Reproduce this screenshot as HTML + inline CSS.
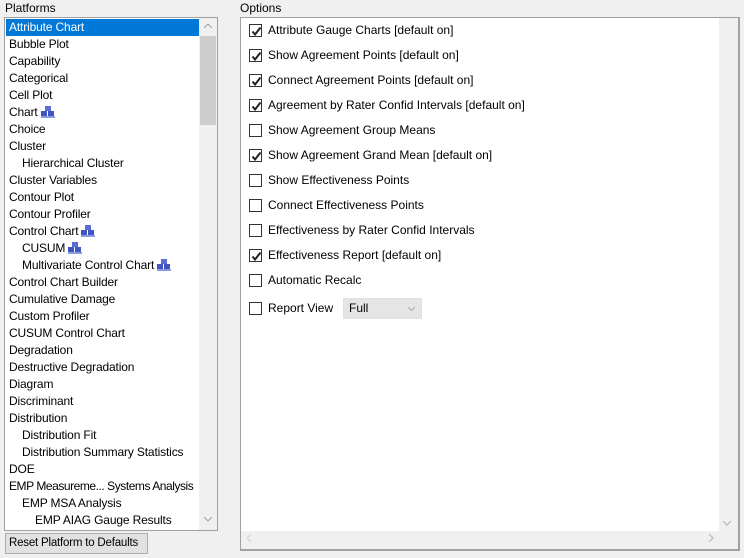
<!DOCTYPE html>
<html><head><style>
*{margin:0;padding:0;box-sizing:border-box}
body{width:744px;height:558px;background:#f0f0f0;font-family:"Liberation Sans",sans-serif;font-size:12px;color:#000;position:relative;overflow:hidden}
.lbl{position:absolute;top:1px;font-size:12px}
#list{position:absolute;left:4px;top:17px;width:214px;height:514px;border:1px solid #a0a0a0;background:#fff;overflow:hidden}
.it{position:absolute;left:1px;height:17px;line-height:17px;white-space:nowrap;padding-left:3px;letter-spacing:-0.15px}
.sel{background:#0078d7;color:#fff;width:194px}
#vs{position:absolute;left:194px;top:0;width:18px;height:512px;background:#f0f0f0}
#thumb{position:absolute;left:1px;top:18px;width:16px;height:89px;background:#cdcdcd}
#opt{position:absolute;left:240px;top:17px;width:500px;height:534px;border:1px solid #a0a0a0;border-right:2px solid #a0a0a0;border-bottom:2px solid #a0a0a0;background:#f0f0f0}
#optin{position:absolute;left:0;top:0;width:478px;height:513px;background:#fff}
.row{position:absolute;left:9px;height:14px;white-space:nowrap}
.cb{position:absolute;left:0;top:0;width:13px;height:13px;border:1px solid #333;background:#fff}
.cb svg{position:absolute;left:1px;top:1px}
.row span{position:absolute;left:19px;top:-1px}
#btn{position:absolute;left:5px;top:533px;width:143px;height:21px;border:1px solid #adadad;background:#e1e1e1;line-height:19px;padding-left:3px;white-space:nowrap;font-size:11.5px;letter-spacing:-0.2px;overflow:hidden}
#dd{position:absolute;left:343px;top:298px;width:79px;height:21px;background:#e5e5e5;border:1px solid #e0e0e0;padding-left:5px;line-height:19px}
.ic{display:inline-block;vertical-align:-2px;margin-left:3px}
</style></head><body>
<div class="lbl" style="left:5px">Platforms</div>
<div class="lbl" style="left:240px">Options</div>
<div id="list">
<div class="it sel" style="top:1px">Attribute Chart</div>
<div class="it" style="top:18px">Bubble Plot</div>
<div class="it" style="top:35px">Capability</div>
<div class="it" style="top:52px">Categorical</div>
<div class="it" style="top:69px">Cell Plot</div>
<div class="it" style="top:86px">Chart<svg class="ic" width="14" height="12"><rect x="4" y="0" width="6" height="5" fill="#5a6fd0"/><rect x="0" y="5" width="6" height="6" fill="#3f55c0"/><rect x="7" y="5" width="6" height="6" fill="#3f55c0"/><rect x="0" y="10" width="14" height="2" fill="#8c9be0"/></svg></div>
<div class="it" style="top:103px">Choice</div>
<div class="it" style="top:120px">Cluster</div>
<div class="it" style="top:137px;padding-left:16px">Hierarchical Cluster</div>
<div class="it" style="top:154px">Cluster Variables</div>
<div class="it" style="top:171px">Contour Plot</div>
<div class="it" style="top:188px">Contour Profiler</div>
<div class="it" style="top:205px">Control Chart<svg class="ic" width="14" height="12"><rect x="4" y="0" width="6" height="5" fill="#5a6fd0"/><rect x="0" y="5" width="6" height="6" fill="#3f55c0"/><rect x="7" y="5" width="6" height="6" fill="#3f55c0"/><rect x="0" y="10" width="14" height="2" fill="#8c9be0"/></svg></div>
<div class="it" style="top:222px;padding-left:16px">CUSUM<svg class="ic" width="14" height="12"><rect x="4" y="0" width="6" height="5" fill="#5a6fd0"/><rect x="0" y="5" width="6" height="6" fill="#3f55c0"/><rect x="7" y="5" width="6" height="6" fill="#3f55c0"/><rect x="0" y="10" width="14" height="2" fill="#8c9be0"/></svg></div>
<div class="it" style="top:239px;padding-left:16px">Multivariate Control Chart<svg class="ic" width="14" height="12"><rect x="4" y="0" width="6" height="5" fill="#5a6fd0"/><rect x="0" y="5" width="6" height="6" fill="#3f55c0"/><rect x="7" y="5" width="6" height="6" fill="#3f55c0"/><rect x="0" y="10" width="14" height="2" fill="#8c9be0"/></svg></div>
<div class="it" style="top:256px">Control Chart Builder</div>
<div class="it" style="top:273px">Cumulative Damage</div>
<div class="it" style="top:290px">Custom Profiler</div>
<div class="it" style="top:307px">CUSUM Control Chart</div>
<div class="it" style="top:324px">Degradation</div>
<div class="it" style="top:341px">Destructive Degradation</div>
<div class="it" style="top:358px">Diagram</div>
<div class="it" style="top:375px">Discriminant</div>
<div class="it" style="top:392px">Distribution</div>
<div class="it" style="top:409px;padding-left:16px">Distribution Fit</div>
<div class="it" style="top:426px;padding-left:16px">Distribution Summary Statistics</div>
<div class="it" style="top:443px">DOE</div>
<div class="it" style="top:460px;letter-spacing:-0.45px">EMP Measureme... Systems Analysis</div>
<div class="it" style="top:477px;padding-left:16px">EMP MSA Analysis</div>
<div class="it" style="top:494px;padding-left:29px">EMP AIAG Gauge Results</div>
<div id="vs"><div id="thumb"></div>
<svg style="position:absolute;left:5px;top:6px" width="8" height="5"><path d="M0 4L4 0L8 4" stroke="#a0a0a0" fill="none"/></svg>
<svg style="position:absolute;left:5px;top:499px" width="8" height="5"><path d="M0 0L4 4L8 0" stroke="#a0a0a0" fill="none"/></svg>
</div>
</div>
<div id="opt"><div id="optin"></div>
<svg style="position:absolute;left:482px;top:503px" width="8" height="5"><path d="M0 0L4 4L8 0" stroke="#b0b0b0" fill="none"/></svg>
<svg style="position:absolute;left:468px;top:516px" width="5" height="8"><path d="M0 0L4 4L0 8" stroke="#b0b0b0" fill="none"/></svg>
<svg style="position:absolute;left:6px;top:516px" width="5" height="8"><path d="M4 0L0 4L4 8" stroke="#d0d0d0" fill="none"/></svg>
</div>
<div class="row" style="left:249px;top:24px"><div class="cb"><svg width="11" height="11"><path d="M1.5 5.5L4 8.5L9.5 1.5" stroke="#222" stroke-width="2" fill="none"/></svg></div><span>Attribute Gauge Charts [default on]</span></div>
<div class="row" style="left:249px;top:49px"><div class="cb"><svg width="11" height="11"><path d="M1.5 5.5L4 8.5L9.5 1.5" stroke="#222" stroke-width="2" fill="none"/></svg></div><span>Show Agreement Points [default on]</span></div>
<div class="row" style="left:249px;top:74px"><div class="cb"><svg width="11" height="11"><path d="M1.5 5.5L4 8.5L9.5 1.5" stroke="#222" stroke-width="2" fill="none"/></svg></div><span>Connect Agreement Points [default on]</span></div>
<div class="row" style="left:249px;top:99px"><div class="cb"><svg width="11" height="11"><path d="M1.5 5.5L4 8.5L9.5 1.5" stroke="#222" stroke-width="2" fill="none"/></svg></div><span>Agreement by Rater Confid Intervals [default on]</span></div>
<div class="row" style="left:249px;top:124px"><div class="cb"></div><span>Show Agreement Group Means</span></div>
<div class="row" style="left:249px;top:149px"><div class="cb"><svg width="11" height="11"><path d="M1.5 5.5L4 8.5L9.5 1.5" stroke="#222" stroke-width="2" fill="none"/></svg></div><span>Show Agreement Grand Mean [default on]</span></div>
<div class="row" style="left:249px;top:174px"><div class="cb"></div><span>Show Effectiveness Points</span></div>
<div class="row" style="left:249px;top:199px"><div class="cb"></div><span>Connect Effectiveness Points</span></div>
<div class="row" style="left:249px;top:224px"><div class="cb"></div><span>Effectiveness by Rater Confid Intervals</span></div>
<div class="row" style="left:249px;top:249px"><div class="cb"><svg width="11" height="11"><path d="M1.5 5.5L4 8.5L9.5 1.5" stroke="#222" stroke-width="2" fill="none"/></svg></div><span>Effectiveness Report [default on]</span></div>
<div class="row" style="left:249px;top:274px"><div class="cb"></div><span>Automatic Recalc</span></div>
<div class="row" style="left:249px;top:302px"><div class="cb"></div><span>Report View</span></div>
<div id="dd">Full<svg style="position:absolute;left:64px;top:8px" width="7" height="4"><path d="M0 0L3.5 3.5L7 0" stroke="#aaa" fill="none"/></svg></div>
<div id="btn">Reset Platform to Defaults</div>
</body></html>
